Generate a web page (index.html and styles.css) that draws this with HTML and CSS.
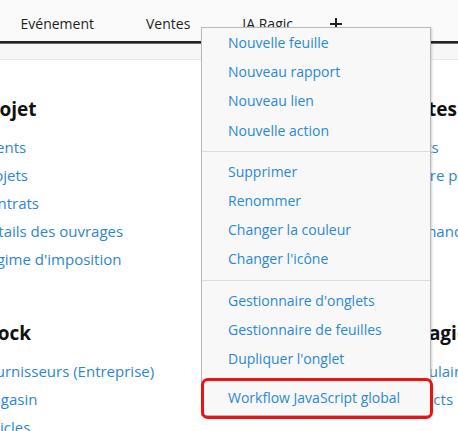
FILE: index.html
```html
<!DOCTYPE html>
<html lang="fr">
<head>
<meta charset="utf-8">
<title>Ragic</title>
<link rel="stylesheet" href="styles.css">
</head>
<body>
<div class="page">
  <header class="topbar">
    <nav class="tabs">
      <span class="tab">Evénement</span>
      <span class="tab">Ventes</span>
      <span class="tab">IA Ragic</span>
      <span class="tab-add"><svg width="12" height="12" viewBox="0 0 12 12"><path d="M6 0V12M0 6H12" stroke="#222" stroke-width="2"/></svg></span>
    </nav>
  </header>
  <div class="tabline"></div>
  <div class="subbar"></div>
  <main class="content">
    <div class="col">
      <section class="group">
        <h3 class="group-title">Projet</h3>
        <a class="link">Clients</a>
        <a class="link">Projets</a>
        <a class="link">Contrats</a>
        <a class="link">Détails des ouvrages</a>
        <a class="link">Régime d'imposition</a>
      </section>
      <section class="group">
        <h3 class="group-title">Stock</h3>
        <a class="link">Fournisseurs (Entreprise)</a>
        <a class="link">Magasin</a>
        <a class="link">Articles</a>
      </section>
    </div>
    <div class="col">
      <section class="group">
        <h3 class="group-title">Ventes</h3>
        <a class="link">Achats</a>
        <a class="link">Facture proforma</a>
        <a class="link">Devis</a>
        <a class="link">Marchandises</a>
        <a class="link">Prix</a>
      </section>
      <section class="group">
        <h3 class="group-title">IA Ragic</h3>
        <a class="link">Formulaires</a>
        <a class="link">Contacts</a>
      </section>
    </div>
  </main>
  <div class="menu">
    <a class="menu-item">Nouvelle feuille</a>
    <a class="menu-item">Nouveau rapport</a>
    <a class="menu-item">Nouveau lien</a>
    <a class="menu-item">Nouvelle action</a>
    <div class="menu-sep"></div>
    <a class="menu-item">Supprimer</a>
    <a class="menu-item">Renommer</a>
    <a class="menu-item">Changer la couleur</a>
    <a class="menu-item">Changer l'icône</a>
    <div class="menu-sep"></div>
    <a class="menu-item">Gestionnaire d'onglets</a>
    <a class="menu-item">Gestionnaire de feuilles</a>
    <a class="menu-item">Dupliquer l'onglet</a>
    <div class="menu-sep menu-sep-last"></div>
    <a class="menu-item menu-item-marked">Workflow JavaScript global</a>
  </div>
</div>
</body>
</html>
```
FILE: styles.css
```css
html, body {
  margin: 0;
  padding: 0;
  background: #fff;
}
body {
  font-family: "Open Sans", "DejaVu Sans", sans-serif;
  overflow: hidden;
}
.page {
  position: relative;
  width: 458px;
  height: 431px;
  overflow: hidden;
}
.topbar {
  height: 41px;
  background: #fafafa;
}
.tabs {
  display: flex;
  align-items: flex-start;
  gap: 52px;
  padding: 14px 0 0 20.5px;
}
.tab {
  font-size: 14px;
  line-height: 20px;
  color: #1e1e1e;
  white-space: nowrap;
}
.tab-add {
  margin-left: -15px;
  padding-top: 4px;
  line-height: 0;
}
.tabline {
  height: 2px;
  background: #232323;
  border-bottom: 1px solid #6b6b6b;
}
.subbar {
  height: 15px;
  background: #f7f7f7;
  border-bottom: 1px solid #e6e6e6;
}
.content {
  display: grid;
  grid-template-columns: 380px 380px;
  column-gap: 33px;
  margin-left: -21px;
  padding-top: 35.8px;
}
.group {
  display: flex;
  flex-direction: column;
  margin-bottom: 47.6px;
}
.group-title {
  margin: 0 0 11px;
  font-size: 19px;
  line-height: 26px;
  font-weight: 700;
  color: #111;
  white-space: nowrap;
}
.link {
  font-size: 15px;
  line-height: 28px;
  color: #2c86d4;
  white-space: nowrap;
}
.menu {
  position: absolute;
  left: 201px;
  top: 27px;
  width: 228px;
  background: #f8f8f8;
  border: 1px solid #b9b9b9;
  box-shadow: 1px 1px 2px rgba(0, 0, 0, 0.18);
  padding: 0 0 3px;
  display: flex;
  flex-direction: column;
}
.menu-item {
  display: block;
  position: relative;
  padding-left: 26px;
  font-size: 14px;
  line-height: 29.2px;
  color: #2a89d6;
  white-space: nowrap;
}
.menu-sep {
  height: 1px;
  background: #dcdcdc;
  margin: 6px 0 5px;
}
.menu-sep-last {
  margin-bottom: 3px;
}
.menu-item-marked::after {
  content: "";
  position: absolute;
  top: -5px;
  bottom: -7px;
  left: -1px;
  right: -3px;
  border: 3px solid #ee1111;
  border-radius: 7px;
}
```
